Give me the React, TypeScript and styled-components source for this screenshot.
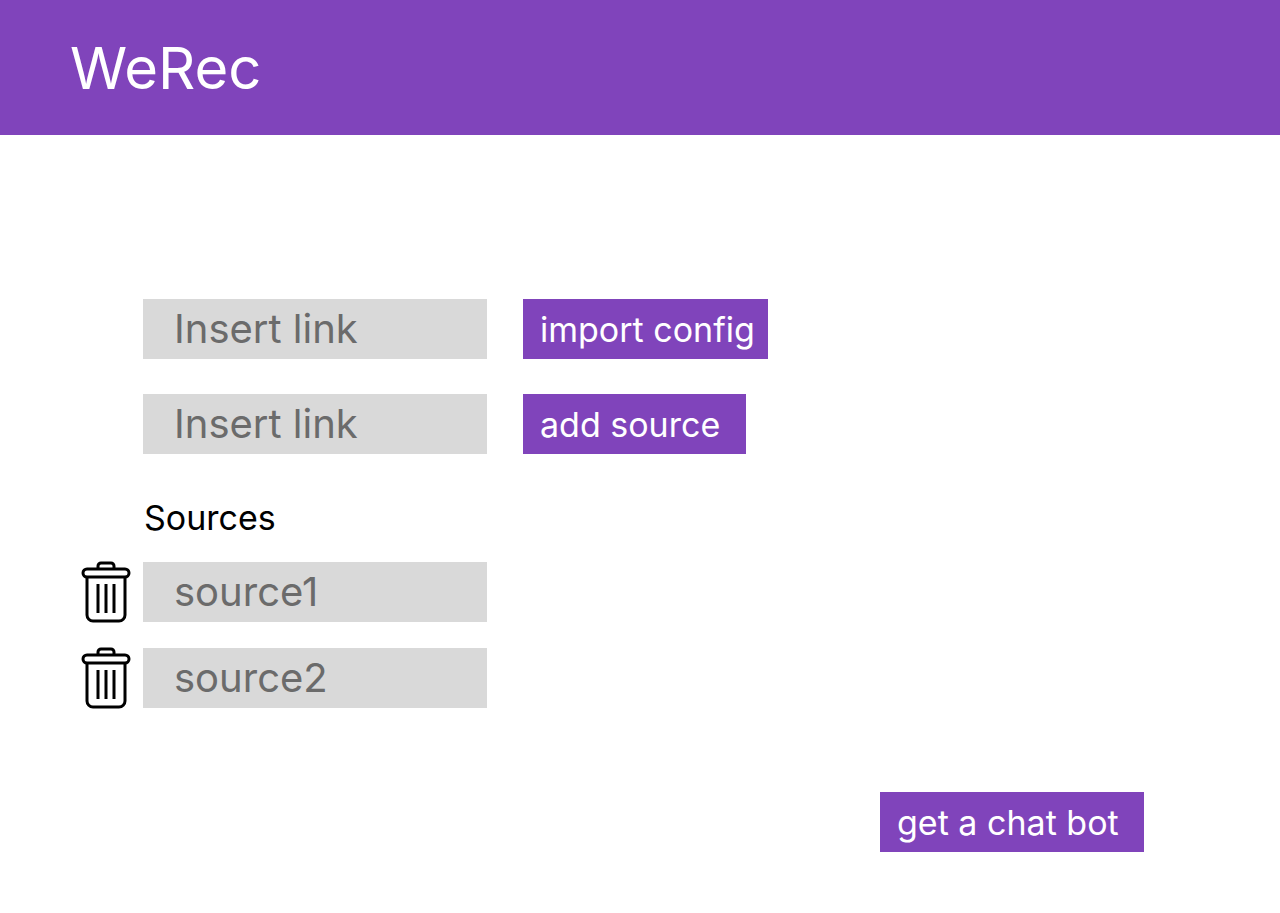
import React from 'react'
import styled, { createGlobalStyle } from 'styled-components';

const GlobalStyle = createGlobalStyle`
    html, body {
        margin: 0;
        padding: 0;
        background: #ffffff;
        font-family: Inter, "Liberation Sans", sans-serif;
    }
`;

const Page = styled.div`
    width: 1280px;
    height: 913px;
    overflow: hidden;
    background: #ffffff;
`;

const Header = styled.header`
    height: 135px;
    background: #8044bb;
    padding-left: 70px;
    display: flex;
    align-items: center;
    h1 {
        margin: 0;
        font-size: 58px;
        font-weight: 400;
        color: #ffffff;
    }
`;

const Content = styled.main`
    padding: 164px 0 0 81px;
`;

const Row = styled.div<{ $gap?: number }>`
    display: flex;
    align-items: flex-start;
    margin-bottom: ${(p) => p.$gap ?? 0}px;
`;

const Field = styled.div`
    width: 344px;
    height: 60px;
    margin-left: 62px;
    padding-left: 31px;
    box-sizing: border-box;
    background: #d9d9d9;
    color: #6b6b6b;
    font-size: 40px;
    line-height: 60px;
`;

const Button = styled.button<{ $width: number }>`
    width: ${(p) => p.$width}px;
    height: 60px;
    margin-left: 36px;
    padding: 0 0 0 17px;
    border: 0;
    background: #8044bb;
    color: #ffffff;
    font-family: inherit;
    font-size: 34px;
    text-align: left;
`;

const SectionTitle = styled.h2`
    margin: 0 0 22px 63px;
    font-size: 34px;
    font-weight: 400;
    line-height: 42px;
    color: #000000;
`;

const SourceRow = styled.div`
    display: flex;
    align-items: center;
    margin-bottom: 24px;
    svg {
        margin-right: -50px;
        flex: none;
    }
`;

const Footer = styled.div`
    display: flex;
    padding: 59px 0 0 763px;
    button {
        margin-left: 36px;
    }
`;

const TrashIcon = () => (
    <svg width="50" height="62" viewBox="0 0 50 62" fill="none" stroke="#000" strokeWidth="3">
        <rect x="2" y="8" width="46" height="8" rx="4" />
        <path d="M17 8V5a3 3 0 0 1 3-3h10a3 3 0 0 1 3 3v3" />
        <path d="M6 16v38a6 6 0 0 0 6 6h26a6 6 0 0 0 6-6V16" />
        <path d="M17 23v29M25 23v29M33 23v29" />
    </svg>
);

const App: React.FC = () => {
    return (
        <Page>
            <GlobalStyle />
            <Header>
                <h1>WeRec</h1>
            </Header>
            <Content>
                <Row $gap={35}>
                    <Field>Insert link</Field>
                    <Button $width={245}>import config</Button>
                </Row>
                <Row $gap={43}>
                    <Field>Insert link</Field>
                    <Button $width={223}>add source</Button>
                </Row>
                <SectionTitle>Sources</SectionTitle>
                <SourceRow>
                    <TrashIcon />
                    <Field>source1</Field>
                </SourceRow>
                <SourceRow>
                    <TrashIcon />
                    <Field>source2</Field>
                </SourceRow>
                <Footer>
                    <Button $width={264}>get a chat bot</Button>
                </Footer>
            </Content>
        </Page>
    )
}

export default App;
